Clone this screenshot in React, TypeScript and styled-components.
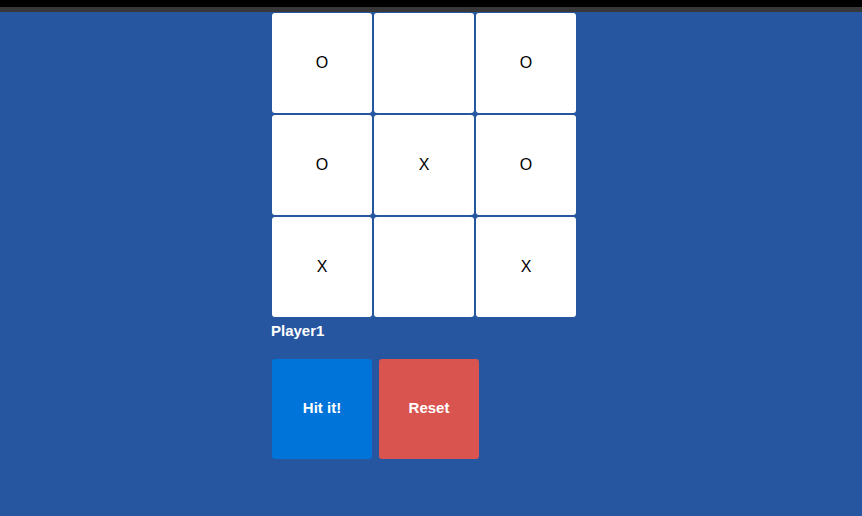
import React, { useState } from 'react';
import styled, { createGlobalStyle } from 'styled-components';

const GlobalStyle = createGlobalStyle`
    html, body {
        margin : 0;
        padding : 0;
        background : #2756a0;
        font-family : "Liberation Sans", Arial, sans-serif;
    }
`;

const start = ['O', '', 'O', 'O', 'X', 'O', 'X', '', 'X'];

const App = () => {
    const [cells, setCells] = useState<string[]>(start);
    const [player, setPlayer] = useState(1);

    const handleCell = (index: number) => {
        if (cells[index]) return;
        const next = [...cells];
        next[index] = player === 1 ? 'X' : 'O';
        setCells(next);
    };

    const handleHit = () => {
        setPlayer(player === 1 ? 2 : 1);
    };

    const handleReset = () => {
        setCells(Array(9).fill(''));
        setPlayer(1);
    };

    return (
        <div>
            <GlobalStyle />
            <TopBar />
            <Page>
                <Board>
                    {cells.map((item, index) => (
                        <Cell key={index} onClick={() => handleCell(index)}>{item}</Cell>
                    ))}
                </Board>
                <PlayerName>Player{player}</PlayerName>
                <Buttons>
                    <ActionBtn $color="#0074d9" onClick={handleHit}>Hit it!</ActionBtn>
                    <ActionBtn $color="#d9534f" onClick={handleReset}>Reset</ActionBtn>
                </Buttons>
            </Page>
        </div>
    );
};

const TopBar = styled.div`
    height : 7px;
    background : #000;
    border-bottom : 5px solid #383838;
`;

const Page = styled.div`
    padding : 1px 0 0 272px;
    min-height : 503px;
    box-sizing : border-box;
`;

const Board = styled.div`
    display : grid;
    grid-template-columns : repeat(3, 100px);
    grid-auto-rows : 100px;
    gap : 2px;
    width : 304px;
`;

const Cell = styled.div`
    background : white;
    border-radius : 3px;
    display : flex;
    justify-content : center;
    align-items : center;
    font-size : 16px;
    color : black;
    cursor : pointer;
`;

const PlayerName = styled.div`
    margin-top : 5px;
    margin-left : -1px;
    height : 18px;
    line-height : 18px;
    font-size : 15px;
    font-weight : bold;
    color : white;
`;

const Buttons = styled.div`
    display : flex;
    gap : 7px;
    margin-top : 19px;
`;

const ActionBtn = styled.button<{ $color: string }>`
    width : 100px;
    height : 100px;
    border : none;
    border-radius : 3px;
    background : ${(p) => p.$color};
    color : white;
    font-family : "Liberation Sans", Arial, sans-serif;
    font-size : 15px;
    font-weight : bold;
    cursor : pointer;
    padding : 0 0 3px 0;
`;

export default App;
